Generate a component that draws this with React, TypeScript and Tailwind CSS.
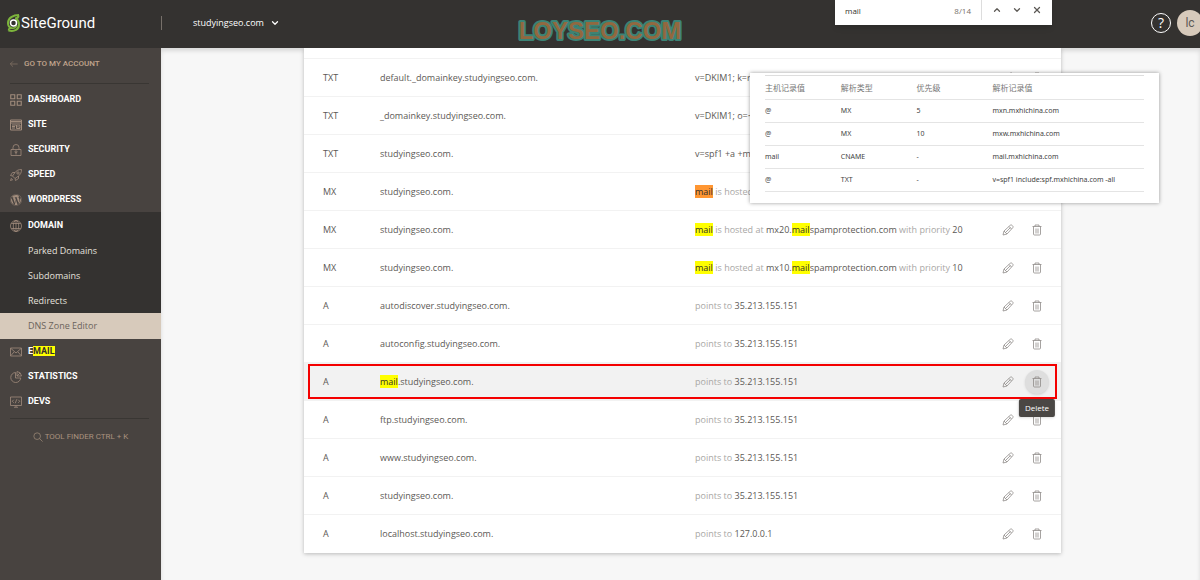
import type { ReactNode } from "react";
import { ChevronDown, ChevronUp, X } from "lucide-react";
import { FaWordpress } from "react-icons/fa";

type IconProps = { children: ReactNode; className?: string };

function Line({ children, className = "w-3 h-3" }: IconProps) {
  return (
    <svg
      viewBox="0 0 24 24"
      fill="none"
      stroke="currentColor"
      strokeWidth="1.6"
      className={className}
      aria-hidden="true"
    >
      {children}
    </svg>
  );
}

const icons = {
  dashboard: (
    <Line>
      <path d="M1.5 1.5h8v8h-8zM14.5 1.5h8v8h-8zM1.5 14.5h8v8h-8zM14.5 14.5h8v8h-8z" strokeWidth="2.2" />
    </Line>
  ),
  site: (
    <Line>
      <path d="M1 2h22v20H1zM1 8h22M1 5h22M4 12h9M4 15h6M4 18h6M13 12h7v7h-7z" strokeWidth="2" />
      <path d="M13 17l3-2 4 3" />
    </Line>
  ),
  security: (
    <Line>
      <path d="M2 11h20v12H2zM6 11V7a6 6 0 0 1 12 0v4" />
      <circle cx="12" cy="15.5" r="2" />
      <path d="M12 17v4" />
    </Line>
  ),
  speed: (
    <Line>
      <path d="M23 1c-6 0-10 2-13 6L5 14l5 5 7-5c4-3 6-7 6-13z" />
      <path d="M10 7H5l-4 6 4 1M17 14v5l-6 4-1-4M3 18l-2 5 5-2" />
      <circle cx="16" cy="8" r="2.3" />
    </Line>
  ),
  domain: (
    <Line>
      <circle cx="12" cy="12" r="11" />
      <ellipse cx="12" cy="12" rx="5.5" ry="11" />
      <path d="M12 1v22M2.5 7h19M2.5 17h19" />
    </Line>
  ),
  email: (
    <Line>
      <path d="M1 4h22v16H1zM2 5l10 9L22 5M2 19l6-7M22 19l-6-7" />
    </Line>
  ),
  statistics: (
    <Line>
      <path d="M11 3a10 10 0 1 0 10.5 11H11z" />
      <path d="M14 1a10 10 0 0 1 9 9h-9zM14 10l6-6" />
    </Line>
  ),
  devs: (
    <Line>
      <path d="M1 2h22v17H1zM8 22.5h8M12 19v3M7.5 7.5l-3 3 3 3M16.5 7.5l3 3-3 3M13.5 6.5l-3 8" />
    </Line>
  ),
};

const topItems = [
  { label: "Dashboard", icon: icons.dashboard },
  { label: "Site", icon: icons.site },
  { label: "Security", icon: icons.security },
  { label: "Speed", icon: icons.speed },
  { label: "WordPress", icon: <FaWordpress className="w-3 h-3" /> },
];

const domainItems = ["Parked Domains", "Subdomains", "Redirects"];

const bottomItems = [
  { label: <>E<Mark>MAIL</Mark></>, icon: icons.email, key: "email" },
  { label: "Statistics", icon: icons.statistics, key: "statistics" },
  { label: "Devs", icon: icons.devs, key: "devs" },
];

function Mark({ children, current }: { children: ReactNode; current?: boolean }) {
  return (
    <mark className={current ? "bg-[#ff9632] text-[#33302d]" : "bg-[#ffff00] text-[#33302d]"}>
      {children}
    </mark>
  );
}

const mxValue = (host: string, priority: number) => (
  <>
    <Mark>mail</Mark> is hosted at{" "}
    <b className="font-normal text-[#5c5955]">
      {host}.<Mark>mail</Mark>spamprotection.com
    </b>{" "}
    with priority <b className="font-normal text-[#5c5955]">{priority}</b>
  </>
);

const aValue = (ip: string) => (
  <>
    points to <b className="font-normal text-[#5c5955]">{ip}</b>
  </>
);

const txtValue = (text: string) => <span className="text-[#5c5955]">{text}</span>;

type DnsRecord = { type: string; name: ReactNode; value: ReactNode; active?: boolean };

const records: DnsRecord[] = [
  { type: "TXT", name: "default._domainkey.studyingseo.com.", value: txtValue("v=DKIM1; k=r") },
  { type: "TXT", name: "_domainkey.studyingseo.com.", value: txtValue("v=DKIM1; o=~") },
  { type: "TXT", name: "studyingseo.com.", value: txtValue("v=spf1 +a +m") },
  { type: "MX", name: "studyingseo.com.", value: <><Mark current>mail</Mark> is hosted</> },
  { type: "MX", name: "studyingseo.com.", value: mxValue("mx20", 20) },
  { type: "MX", name: "studyingseo.com.", value: mxValue("mx10", 10) },
  { type: "A", name: "autodiscover.studyingseo.com.", value: aValue("35.213.155.151") },
  { type: "A", name: "autoconfig.studyingseo.com.", value: aValue("35.213.155.151") },
  { type: "A", name: <><Mark>mail</Mark>.studyingseo.com.</>, value: aValue("35.213.155.151"), active: true },
  { type: "A", name: "ftp.studyingseo.com.", value: aValue("35.213.155.151") },
  { type: "A", name: "www.studyingseo.com.", value: aValue("35.213.155.151") },
  { type: "A", name: "studyingseo.com.", value: aValue("35.213.155.151") },
  { type: "A", name: "localhost.studyingseo.com.", value: aValue("127.0.0.1") },
];

const hostRecords = [
  ["@", "MX", "5", "mxn.mxhichina.com"],
  ["@", "MX", "10", "mxw.mxhichina.com"],
  ["mail", "CNAME", "-", "mail.mxhichina.com"],
  ["@", "TXT", "-", "v=spf1 include:spf.mxhichina.com -all"],
];

function PencilIcon() {
  return (
    <Line className="w-3 h-3">
      <path d="M2 22l2-8L16 3c1.5-1.5 3-1.5 4.5 0l.5.5c1.500 1.500 1.500 3 0 4.500L10 20zM4 14l6 6M14 5l5 5M7 17L17 7" />
    </Line>
  );
}

function TrashIcon() {
  return (
    <Line className="w-3 h-3">
      <path d="M3 5h18M8 5V2h8v3M5 5v15a2 2 0 0 0 2 2h10a2 2 0 0 0 2-2V5M10 9v10M14 9v10" />
    </Line>
  );
}

function Header() {
  return (
    <header className="relative z-10 flex items-center h-12 pb-0.5 bg-[#343230] text-white overflow-hidden">
      <div className="flex items-center w-[162px] h-3.5 pl-[7px] border-r border-[#77706a]">
        <a href="#home" className="flex items-center gap-px" aria-label="SiteGround">
          <svg viewBox="0 0 26 36" fill="none" className="w-[13px] h-[18px]" aria-hidden="true">
            <path d="M24 2C12 2 2 8 2 18c0 6 3 9 7 10" stroke="#7db53c" strokeWidth="4" />
            <path d="M23 3c0 5-3 6-7 6M3 33c12 3 21-2 21-12 0-5-2-9-6-11" stroke="#7db53c" strokeWidth="4" />
            <path d="M3 33c0-4 3-5 6-5 5 1 9-1 11-5" stroke="#7db53c" strokeWidth="3" />
            <circle cx="13" cy="18" r="6" fill="#343230" stroke="#fff" strokeWidth="3" />
          </svg>
          <span className="font-['Roboto',sans-serif] text-[15px] leading-5">SiteGround</span>
        </a>
      </div>
      <button className="flex items-center gap-1.5 ml-[31px] font-['Open_Sans',sans-serif] text-[9px]">
        studyingseo.com
        <ChevronDown className="w-2.5 h-2.5" strokeWidth={3} />
      </button>
      <div className="ml-auto flex items-center gap-1.5 -mr-[3px]">
        <button className="w-5 h-5 rounded-full border border-white text-[14px] leading-4 font-['Open_Sans',sans-serif]" aria-label="Help">
          ?
        </button>
        <button className="w-[26px] h-[26px] rounded-full bg-[#d7cabb] text-[#5c5955] text-[12px] font-['Roboto',sans-serif]">
          lc
        </button>
      </div>
    </header>
  );
}

function Watermark() {
  return (
    <svg
      viewBox="0 0 170 28"
      className="absolute z-20 top-4 left-1/2 -translate-x-1/2 w-[170px] h-7 pointer-events-none"
    >
      <text
        x="85"
        y="23"
        textAnchor="middle"
        fill="#92683f"
        stroke="#3c8375"
        strokeWidth="4"
        strokeLinejoin="round"
        paintOrder="stroke"
        className="font-['Liberation_Sans',sans-serif] font-bold text-[24px]"
      >
        LOYSEO.COM
      </text>
    </svg>
  );
}

function FindBar() {
  return (
    <div className="absolute z-20 top-0 right-[148px] w-[217px] h-[25px] flex items-center bg-white shadow-md text-[#5c5955] font-['Open_Sans',sans-serif] text-[8px]">
      <input
        aria-label="Find in page"
        defaultValue="mail"
        className="w-24 flex-1 min-w-0 pl-2.5 -mt-1 outline-none text-[#33302d]"
      />
      <span className="-mt-1 mr-2.5 text-[#77706a]">8/14</span>
      <div className="flex items-center gap-2.5 h-5 mb-[5px] pl-2.5 pr-2.5 border-l border-[#dddddd]">
        <button aria-label="Previous match"><ChevronUp className="w-2.5 h-2.5" strokeWidth={3} /></button>
        <button aria-label="Next match"><ChevronDown className="w-2.5 h-2.5" strokeWidth={3} /></button>
        <button aria-label="Close"><X className="w-2.5 h-2.5" strokeWidth={3} /></button>
      </div>
    </div>
  );
}

function NavItem({ icon, children }: { icon: ReactNode; children: ReactNode }) {
  return (
    <a href="#nav" className="flex items-center gap-1.5 h-[25px] pl-2.5 text-[#a18c7c]">
      {icon}
      <span className="uppercase font-bold text-white">{children}</span>
    </a>
  );
}

function Sidebar() {
  return (
    <nav className="w-[161px] shrink-0 bg-[#484340] font-['Roboto',sans-serif] text-[9px]">
      <a href="#account" className="flex items-center gap-1.5 h-9 ml-2.5 mr-3 pb-1 border-b border-[#393633] text-[8px] font-medium uppercase text-[#c0a48d]">
        <Line className="w-2 h-2 text-[#8d7a6b]">
          <path d="M23 12H1M9 4l-8 8 8 8" strokeWidth="2" />
        </Line>
        Go to my account
      </a>
      <div className="pt-[3px]">
        {topItems.map((item) => (
          <NavItem key={item.label} icon={item.icon}>
            {item.label}
          </NavItem>
        ))}
      </div>
      <div className="pt-px bg-[#343230]">
        <NavItem icon={icons.domain}>Domain</NavItem>
        <div className="font-['Open_Sans',sans-serif] text-[9px]">
          {domainItems.map((label) => (
            <a key={label} href="#domain" className="flex items-center h-[25px] pl-7 text-[#e5e1dd]">
              {label}
            </a>
          ))}
          <a href="#dns" aria-current="page" className="flex items-center h-[26px] pl-7 bg-[#d7cabb] text-[#6b635c]">
            DNS Zone Editor
          </a>
        </div>
      </div>
      <div className="ml-2.5 mr-3 pb-1 border-b border-[#393633]">
        {bottomItems.map((item) => (
          <div key={item.key} className="-ml-2.5">
            <NavItem icon={item.icon}>{item.label}</NavItem>
          </div>
        ))}
      </div>
      <button className="flex items-center justify-center gap-0.5 w-full h-9 text-[8px] text-[#a8927f]">
        <Line className="w-2.5 h-2.5">
          <circle cx="10" cy="10" r="8" />
          <path d="M16 16l7 7" />
        </Line>
        TOOL FINDER CTRL + K
      </button>
    </nav>
  );
}

function RecordRow({ record }: { record: DnsRecord }) {
  const { type, name, value, active } = record;
  return (
    <tr className={active ? "relative h-[38px] border-t border-[#f2f2f2] bg-[#f2f2f2]" : "h-[38px] border-t border-[#f2f2f2]"}>
      <td className="pl-[19px]">{type}</td>
      <td>{name}</td>
      <td className="text-[#a9a7a5]">{value}</td>
      <td className="text-[#8f8c89]">
        <div className="flex items-center gap-[5px]">
          <button className="w-6 h-6 flex items-center justify-center" aria-label="Edit">
            <PencilIcon />
          </button>
          <button
            className={
              active
                ? "relative z-10 w-6 h-6 flex items-center justify-center rounded-full bg-[#dedede] shadow"
                : "w-6 h-6 flex items-center justify-center"
            }
            aria-label="Delete"
          >
            <TrashIcon />
            {active && (
              <span className="absolute top-[29px] left-1/2 -translate-x-1/2 px-1.5 leading-[18px] rounded-xs bg-[#4a4744] text-white text-[8px] shadow">
                Delete
              </span>
            )}
          </button>
        </div>
        {active && (
          <span className="absolute inset-x-1 top-0 bottom-0.5 border-2 border-[#f40000] pointer-events-none" />
        )}
      </td>
    </tr>
  );
}

function HostRecords() {
  return (
    <aside className="absolute z-20 top-[73px] right-[41px] w-[409px] h-[130px] px-[15px] pt-0.5 bg-white shadow-[0_0_4px_rgba(0,0,0,0.4)]">
      <table className="w-full table-fixed border-t border-[#dedede] text-left font-['Noto_Sans','Noto_Sans_CJK_SC',sans-serif] text-[7px] text-[#444444]">
        <thead>
          <tr className="h-6 border-b border-[#e4e4e4] text-[8px] text-[#777777]">
            <th className="w-1/5 font-normal">主机记录值</th>
            <th className="w-1/5 font-normal">解析类型</th>
            <th className="w-1/5 font-normal">优先级</th>
            <th className="w-2/5 font-normal">解析记录值</th>
          </tr>
        </thead>
        <tbody>
          {hostRecords.map((row) => (
            <tr key={row[3]} className="h-[23px] border-b border-[#e4e4e4]">
              {row.map((cell, i) => (
                <td key={i}>{cell}</td>
              ))}
            </tr>
          ))}
        </tbody>
      </table>
    </aside>
  );
}

export default function App() {
  return (
    <div className="relative min-h-screen flex flex-col overflow-hidden bg-[#f7f7f7]">
      <Header />
      <Watermark />
      <FindBar />
      <HostRecords />
      <div className="flex flex-1">
        <Sidebar />
        <main className="flex-1 pl-[143px] pr-[139px] pb-7 shadow-[inset_0_3px_4px_rgba(0,0,0,0.12)]">
          <div className="pt-2.5 bg-white shadow-[0_1px_4px_rgba(0,0,0,0.25)]">
            <table className="w-full table-fixed text-left font-['Open_Sans',sans-serif] text-[9px] text-[#5c5955]">
              <colgroup>
                <col className="w-[76px]" />
                <col className="w-[315px]" />
                <col />
                <col className="w-[65px]" />
              </colgroup>
              <tbody>
                {records.map((record, i) => (
                  <RecordRow key={i} record={record} />
                ))}
              </tbody>
            </table>
          </div>
        </main>
      </div>
    </div>
  );
}
